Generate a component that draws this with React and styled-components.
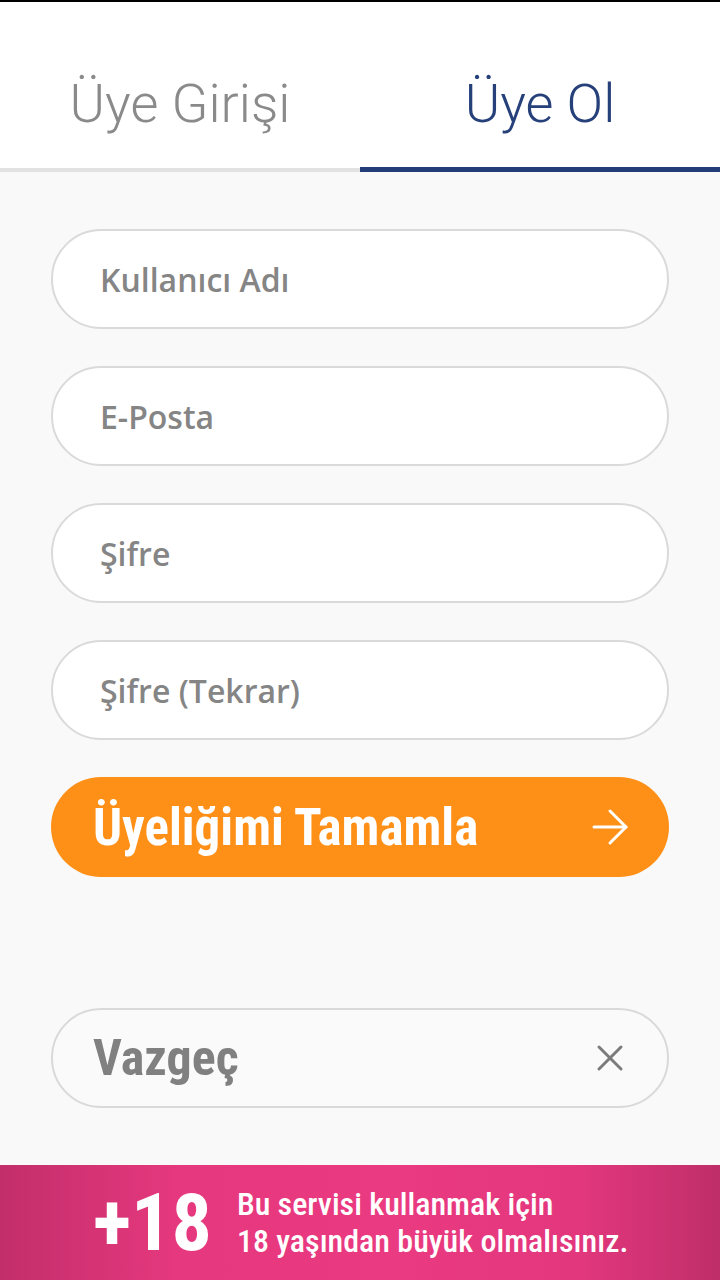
import React from 'react';
import styled, { createGlobalStyle } from 'styled-components';

const GlobalStyle = createGlobalStyle`
    * {
        box-sizing: border-box;
    }
    body {
        margin: 0;
        background-color: #F9F9F9;
        font-family: Roboto, 'Noto Sans', sans-serif;
    }
`

const fields = ["Kullanıcı Adı", "E-Posta", "Şifre", "Şifre (Tekrar)"];

export default function App () {

    return (
        <Screen>
            <GlobalStyle />
            <Tabs>
                <Tab>Üye Girişi</Tab>
                <Tab active>Üye Ol</Tab>
            </Tabs>
            <Form onSubmit={(e) => e.preventDefault()}>
                {fields.map((field) => (
                    <Input key={field} type={field.startsWith("Şifre") ? "password" : "text"} placeholder={field} />
                ))}
                <SubmitButton type="submit">
                    Üyeliğimi Tamamla
                    <svg width="38" height="38" viewBox="0 0 38 38" fill="none" stroke="#FFFFFF" strokeWidth="3" strokeLinecap="round" strokeLinejoin="round">
                        <path d="M3 19h32" />
                        <path d="M19 3l16 16-16 16" />
                    </svg>
                </SubmitButton>
                <CancelButton type="button">
                    Vazgeç
                    <svg width="28" height="28" viewBox="0 0 28 28" fill="none" stroke="#7B7B7B" strokeWidth="3" strokeLinecap="round">
                        <path d="M3 3l22 22" />
                        <path d="M25 3L3 25" />
                    </svg>
                </CancelButton>
            </Form>
            <AgeBanner>
                <Plus18>+18</Plus18>
                <Notice>
                    Bu servisi kullanmak için<br />
                    18 yaşından büyük olmalısınız.
                </Notice>
            </AgeBanner>
        </Screen>
    )
}

const Screen = styled.div`
    width: 720px;
    height: 1280px;
    background-color: #F9F9F9;
    display: flex;
    flex-direction: column;
    overflow: hidden;
`
const Tabs = styled.div`
    display: flex;
    background-color: #FFFFFF;
    border-top: 2px solid #000000;
`
const Tab = styled.div`
    flex: 1;
    height: 170px;
    padding-top: 74px;
    text-align: center;
    font-family: Roboto, sans-serif;
    font-weight: 300;
    font-size: 54px;
    line-height: 56px;
    color: ${(props) => props.active ? "#26407A" : "#8A8A8A"};
    border-bottom: ${(props) => props.active ? "5px solid #223C78" : "4px solid #E2E2E2"};
    cursor: pointer;
`
const Form = styled.form`
    display: flex;
    flex-direction: column;
    padding: 57px 51px 0 51px;
    gap: 37px;
`
const Input = styled.input`
    width: 618px;
    height: 100px;
    border: 2px solid #DADADA;
    border-radius: 50px;
    background-color: #FFFFFF;
    padding: 0 0 0 47px;
    font-family: 'Open Sans', sans-serif;
    font-weight: 600;
    font-size: 32px;
    color: #555555;
    outline: none;

    &::placeholder {
        color: #858585;
    }
`
const SubmitButton = styled.button`
    width: 618px;
    height: 100px;
    border: none;
    border-radius: 50px;
    background-color: #FE8F17;
    color: #FFFFFF;
    display: flex;
    align-items: center;
    justify-content: space-between;
    padding: 0 40px 0 42px;
    font-family: 'Roboto Condensed', Roboto, sans-serif;
    font-weight: 700;
    font-size: 51px;

    &:hover {
        cursor: pointer;
    }
`
const CancelButton = styled.button`
    width: 618px;
    height: 100px;
    margin-top: 94px;
    border: 2px solid #D9D9D9;
    border-radius: 50px;
    background-color: #FAFAFA;
    color: #808080;
    display: flex;
    align-items: center;
    justify-content: space-between;
    padding: 0 43px 0 40px;
    font-family: 'Roboto Condensed', Roboto, sans-serif;
    font-weight: 700;
    font-size: 50px;

    &:hover {
        cursor: pointer;
    }
`
const AgeBanner = styled.div`
    margin-top: auto;
    height: 115px;
    display: flex;
    align-items: center;
    gap: 25px;
    padding-left: 93px;
    background: linear-gradient(90deg, #C22E6A 0%, #E6387E 25%, #EA3A81 55%, #E3377D 80%, #BF2E69 100%);
    color: #FFFFFF;
`
const Plus18 = styled.div`
    font-family: 'Roboto Condensed', Roboto, sans-serif;
    font-weight: 700;
    font-size: 80px;
    line-height: 80px;
`
const Notice = styled.div`
    font-family: 'Roboto Condensed', Roboto, sans-serif;
    font-weight: 500;
    font-size: 32px;
    line-height: 37px;
`
